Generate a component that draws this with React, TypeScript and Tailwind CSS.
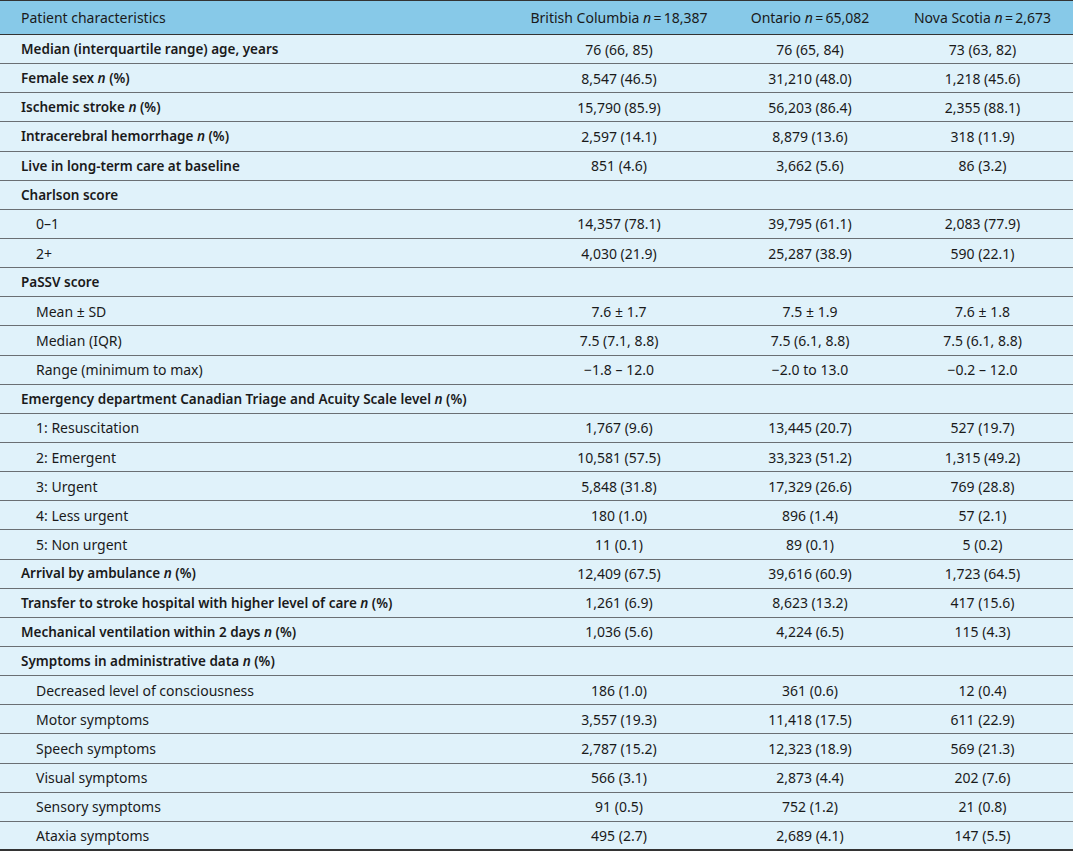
import React from "react";

type Row = { label: React.ReactNode; v?: [string, string, string]; sub?: boolean };

const N = () => <i className="italic">n</i>;

const rows: Row[] = [
  { label: "Median (interquartile range) age, years", v: ["76 (66, 85)", "76 (65, 84)", "73 (63, 82)"] },
  { label: <>Female sex <N /> (%)</>, v: ["8,547 (46.5)", "31,210 (48.0)", "1,218 (45.6)"] },
  { label: <>Ischemic stroke <N /> (%)</>, v: ["15,790 (85.9)", "56,203 (86.4)", "2,355 (88.1)"] },
  { label: <>Intracerebral hemorrhage <N /> (%)</>, v: ["2,597 (14.1)", "8,879 (13.6)", "318 (11.9)"] },
  { label: "Live in long-term care at baseline", v: ["851 (4.6)", "3,662 (5.6)", "86 (3.2)"] },
  { label: "Charlson score" },
  { label: "0\u20131", v: ["14,357 (78.1)", "39,795 (61.1)", "2,083 (77.9)"], sub: true },
  { label: "2+", v: ["4,030 (21.9)", "25,287 (38.9)", "590 (22.1)"], sub: true },
  { label: "PaSSV score" },
  { label: "Mean \u00b1 SD", v: ["7.6 \u00b1 1.7", "7.5 \u00b1 1.9", "7.6 \u00b1 1.8"], sub: true },
  { label: "Median (IQR)", v: ["7.5 (7.1, 8.8)", "7.5 (6.1, 8.8)", "7.5 (6.1, 8.8)"], sub: true },
  { label: "Range (minimum to max)", v: ["\u22121.8 \u2013 12.0", "\u22122.0 to 13.0", "\u22120.2 \u2013 12.0"], sub: true },
  { label: <>Emergency department Canadian Triage and Acuity Scale level <N /> (%)</> },
  { label: "1: Resuscitation", v: ["1,767 (9.6)", "13,445 (20.7)", "527 (19.7)"], sub: true },
  { label: "2: Emergent", v: ["10,581 (57.5)", "33,323 (51.2)", "1,315 (49.2)"], sub: true },
  { label: "3: Urgent", v: ["5,848 (31.8)", "17,329 (26.6)", "769 (28.8)"], sub: true },
  { label: "4: Less urgent", v: ["180 (1.0)", "896 (1.4)", "57 (2.1)"], sub: true },
  { label: "5: Non urgent", v: ["11 (0.1)", "89 (0.1)", "5 (0.2)"], sub: true },
  { label: <>Arrival by ambulance <N /> (%)</>, v: ["12,409 (67.5)", "39,616 (60.9)", "1,723 (64.5)"] },
  { label: <>Transfer to stroke hospital with higher level of care <N /> (%)</>, v: ["1,261 (6.9)", "8,623 (13.2)", "417 (15.6)"] },
  { label: <>Mechanical ventilation within 2 days <N /> (%)</>, v: ["1,036 (5.6)", "4,224 (6.5)", "115 (4.3)"] },
  { label: <>Symptoms in administrative data <N /> (%)</> },
  { label: "Decreased level of consciousness", v: ["186 (1.0)", "361 (0.6)", "12 (0.4)"], sub: true },
  { label: "Motor symptoms", v: ["3,557 (19.3)", "11,418 (17.5)", "611 (22.9)"], sub: true },
  { label: "Speech symptoms", v: ["2,787 (15.2)", "12,323 (18.9)", "569 (21.3)"], sub: true },
  { label: "Visual symptoms", v: ["566 (3.1)", "2,873 (4.4)", "202 (7.6)"], sub: true },
  { label: "Sensory symptoms", v: ["91 (0.5)", "752 (1.2)", "21 (0.8)"], sub: true },
  { label: "Ataxia symptoms", v: ["495 (2.7)", "2,689 (4.1)", "147 (5.5)"], sub: true },
];

const grid = "grid grid-cols-[510px_218px_164px_181px]";

export default function App() {
  return (
    <div className="w-[1073px] h-[855px] bg-white text-[14px] text-[#1a1a1a] font-['Noto_Sans',sans-serif]">
      <div className="border-t border-[#333]">
        <div className={`${grid} h-[34px] bg-[#87c9e8] border-b-[1.5px] border-[#333] items-center`}>
          <div className="pl-[21px]">Patient characteristics</div>
          <div className="text-center">British Columbia <N />{"\u2009=\u2009"}18,387</div>
          <div className="text-center">Ontario <N />{"\u2009=\u2009"}65,082</div>
          <div className="text-center">Nova Scotia <N />{"\u2009=\u2009"}2,673</div>
        </div>
        {rows.map((r, i) => {
          const last = i === rows.length - 1;
          return (
            <div
              key={i}
              className={`${grid} h-[29.15px] bg-[#e0f2fa] items-center ${
                last ? "border-b-2 border-[#333]" : "border-b border-[#6a6f73]"
              }`}
            >
              <div
                className={
                  r.sub ? "pl-[36px]" : "pl-[21px] text-[13.5px] font-semibold whitespace-nowrap"
                }
              >
                {r.label}
              </div>
              {r.v ? (
                r.v.map((x, j) => (
                  <div key={j} className="text-center">
                    {x}
                  </div>
                ))
              ) : (
                <>
                  <div />
                  <div />
                  <div />
                </>
              )}
            </div>
          );
        })}
      </div>
    </div>
  );
}
